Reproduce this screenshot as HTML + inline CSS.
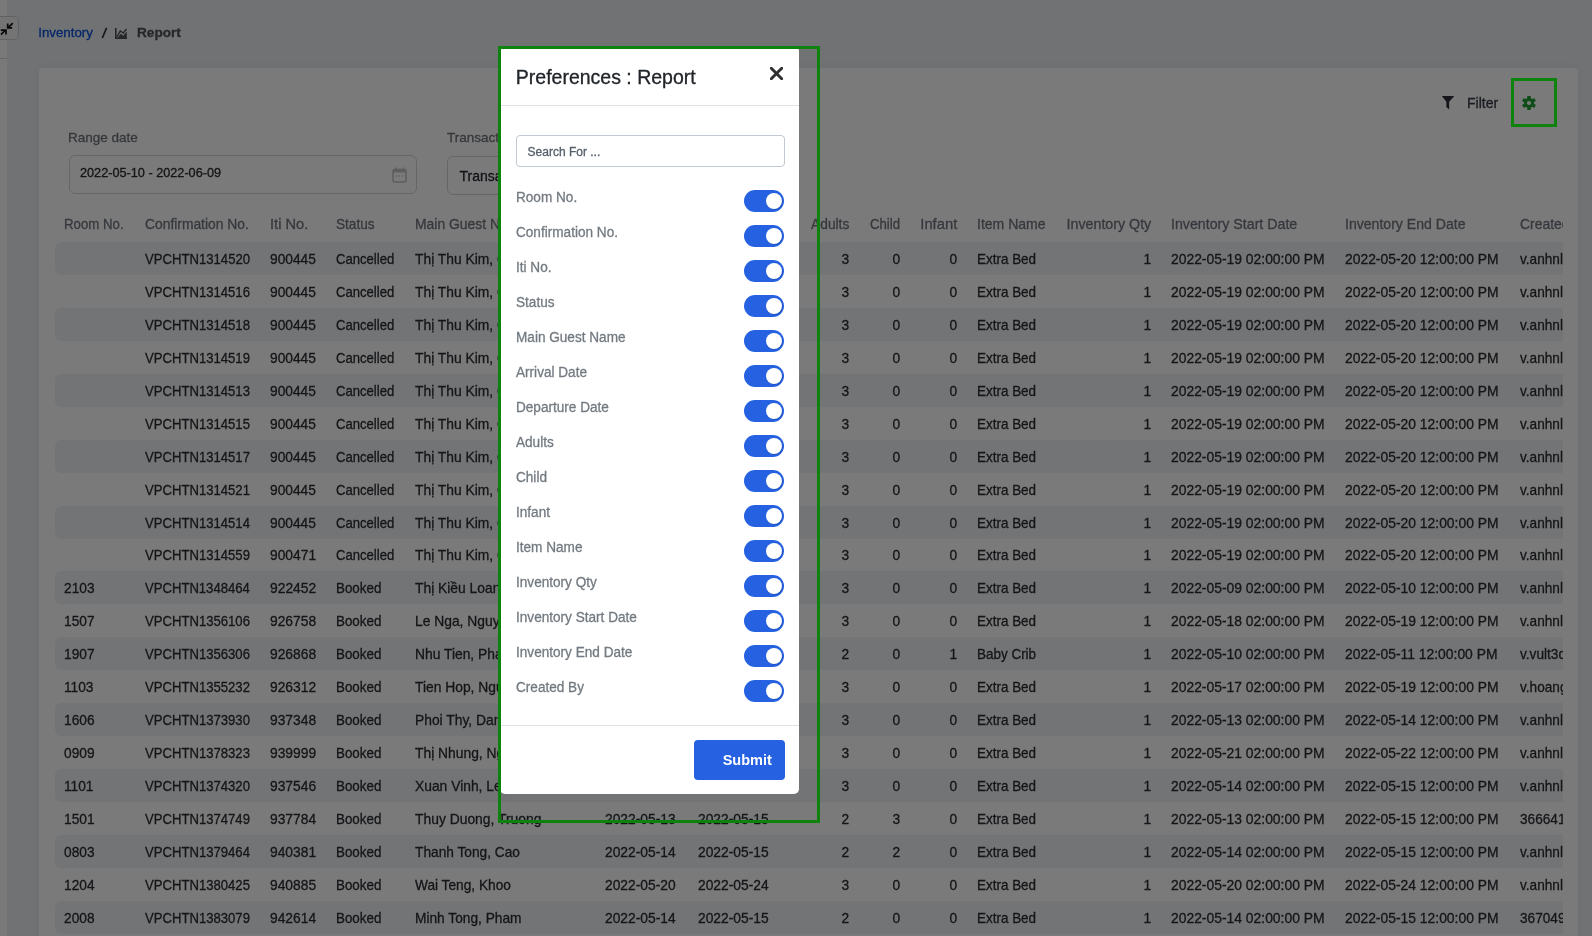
<!DOCTYPE html>
<html><head><meta charset="utf-8">
<style>
*{margin:0;padding:0;box-sizing:border-box}
html,body{width:1592px;height:936px;overflow:hidden}
body{position:relative;background:#eceef1;font-family:"Liberation Sans",sans-serif;color:#3b3d42}
.abs{position:absolute}
#tbl,#modal,#bc,#filt,.lbl,.inp{will-change:transform}
.c,.hc,.lbl,.inp span,#filt,.tl,#mtitle,#srch span,#bc span{-webkit-text-stroke:0.3px currentColor}
#side{position:absolute;left:0;top:0;width:7px;height:936px;background:#fdfdfd}
#side .hl{position:absolute;left:0;top:58px;width:7px;height:1px;background:#d9d9d9}
#cmp{position:absolute;left:-10px;top:16px;width:29px;height:24px;border:1px solid #c9cbcf;border-radius:5px;background:#f3f3f3}
#bc{position:absolute;left:39px;top:23px;height:20px;font-size:13.3px;white-space:nowrap}
#bc .lnk{position:absolute;left:-0.8px;top:0;line-height:20px;color:#0a50dc}
#bc .sl{position:absolute;left:62.5px;top:0;line-height:20px;color:#3e4147;font-size:14px;font-weight:bold}
#bc .rep{position:absolute;left:98px;top:0;line-height:20px;color:#4f5258;font-weight:bold;font-size:13.6px}
#card{position:absolute;left:39px;top:68px;width:1539px;height:900px;background:#fff;border-radius:4px;box-shadow:0 0 10px rgba(60,60,70,.05)}
#filt{position:absolute;left:1466.5px;top:93px;line-height:20px;font-size:14px;color:#363b47}
#tbl{position:absolute;left:55px;top:200px;width:1508px;height:736px;overflow:hidden}
.hc,.c{position:absolute;white-space:nowrap;font-size:14.5px;transform-origin:0 50%}
.hc{top:14px;line-height:20px;color:#70757e}
.r{text-align:right}
.row{position:absolute;left:0;width:1700px;height:33px;border-radius:6px}
.row.s{background:#f1f2f5}
.c{top:1px;line-height:33px;color:#2c2e33}
.lbl{position:absolute;font-size:13.5px;line-height:20px;color:#70747b;white-space:nowrap}
.inp{position:absolute;border:1px solid #d3d6dd;border-radius:6px;background:#fff}
.inp span{position:absolute;white-space:nowrap;color:#2b2b2b}
#ov{position:absolute;left:0;top:0;width:1592px;height:936px;background:rgba(0,0,0,0.52)}
#modal{position:absolute;left:500px;top:46px;width:299px;height:748px;background:#fff;border-radius:5px}
#mtitle{position:absolute;left:15.8px;top:18px;line-height:26px;font-size:19.5px;color:#212529;white-space:nowrap}
#mdiv1{position:absolute;left:0;top:59px;width:299px;height:1px;background:#dee2e6}
#srch{position:absolute;left:16px;top:89px;width:268.5px;height:32px;border:1px solid #c3c9d0;border-radius:4px}
#srch span{position:absolute;left:10.6px;top:6px;line-height:20px;font-size:12px;color:#56606b;white-space:nowrap}
#trs{position:absolute;left:1px;top:141.5px;width:298px}
.tr{position:absolute;left:0;width:298px;height:35px}
.tl{position:absolute;left:15.2px;top:0px;line-height:20px;font-size:13.8px;color:#737a80;transform:scaleX(.985);transform-origin:0 50%;white-space:nowrap}
.tg{position:absolute;left:243px;top:2.5px;width:40px;height:22px;border-radius:11px;background:#2661e2}
.tg i{position:absolute;right:2px;top:3px;width:16px;height:16px;border-radius:50%;background:#fff;box-shadow:0.5px 0.5px 1px rgba(0,0,0,.25)}
#mdiv2{position:absolute;left:0;top:679px;width:299px;height:1px;background:#dee2e6}
#sub{position:absolute;left:194px;top:694px;width:91px;height:40px;border-radius:4px;background:#2661e2}
#sub span{position:absolute;left:28.7px;top:10px;line-height:20px;font-size:14.5px;font-weight:bold;color:#fff}
.gb{position:absolute;border:3px solid #0d830d}
</style></head><body>
<div id="side"><div class="hl"></div></div>
<div id="cmp"></div><svg class="abs" style="left:0;top:22px" width="14" height="14" viewBox="0 0 14 14"><path d="M12.8 1.1 L8.2 5.6 M7.7 1.6 V5.9 H12.2 M1 12.6 L5.6 8 M0.8 8.1 H6 V12.4" stroke="#111" stroke-width="1.7" fill="none"/></svg>
<div id="bc">
 <span class="lnk">Inventory</span>
 <svg class="abs" style="left:62px;top:4px" width="7" height="12" viewBox="0 0 7 12"><path d="M1.3 11 L5.6 0.8" stroke="#2f3237" stroke-width="1.7"/></svg>
 <svg class="abs" style="left:76px;top:4.8px" width="13" height="11" viewBox="0 0 13 11"><path d="M0.8 0 V10.2 H12" stroke="#4f5258" stroke-width="1.6" fill="none"/><path d="M1.8 9 L5.3 3 L8.4 5 L11.5 0.8" stroke="#4f5258" stroke-width="1.4" fill="none"/><path d="M2.6 10 L5.5 5.8 L8.3 7.8 L11.8 3.6 V10.2 H2.6 Z" fill="#4f5258"/></svg>
 <span class="rep">Report</span>
</div>
<div id="card"></div>
<svg class="abs" style="left:1441.85px;top:95.95px" width="13" height="14" viewBox="0 0 13 14"><path d="M0 0.3 Q0 0 0.4 0 H11.7 Q12.1 0 12.1 0.3 L7.15 5.65 V13.6 L4.35 11 V5.65 Z" fill="#2a2f3a"/></svg>
<div id="filt">Filter</div>
<svg class="abs" style="left:1522px;top:96px" width="14" height="14" viewBox="-7 -7 14 14"><circle r="3.55" fill="none" stroke="#20a035" stroke-width="2.9"/><g fill="#20a035"><rect x="-1.8" y="-7" width="3.6" height="3.4"/><rect x="-1.8" y="-7" width="3.6" height="3.4" transform="rotate(60)"/><rect x="-1.8" y="-7" width="3.6" height="3.4" transform="rotate(120)"/><rect x="-1.8" y="-7" width="3.6" height="3.4" transform="rotate(180)"/><rect x="-1.8" y="-7" width="3.6" height="3.4" transform="rotate(240)"/><rect x="-1.8" y="-7" width="3.6" height="3.4" transform="rotate(300)"/></g></svg>
<div class="lbl" style="left:68px;top:128px">Range date</div>
<div class="inp" style="left:69px;top:155px;width:347.5px;height:38.5px"><span style="left:10px;top:7px;line-height:20px;font-size:12.7px">2022-05-10 - 2022-06-09</span>
<svg class="abs" style="left:322px;top:10.5px" width="15" height="16" viewBox="0 0 15 16"><rect x="1" y="2.5" width="13" height="12.5" rx="1.5" fill="none" stroke="#c4c4c4" stroke-width="1.6"/><rect x="1" y="2.5" width="13" height="3" fill="#c4c4c4"/><path d="M4 0.5 V3 M11 0.5 V3" stroke="#c4c4c4" stroke-width="1.5"/><circle cx="4.5" cy="9" r=".8" fill="#c4c4c4"/><circle cx="7.5" cy="9" r=".8" fill="#c4c4c4"/><circle cx="10.5" cy="9" r=".8" fill="#c4c4c4"/></svg></div>
<div class="lbl" style="left:446.5px;top:128px">Transaction Type</div>
<div class="inp" style="left:447px;top:155.5px;width:347px;height:39px"><span style="left:11.5px;top:8.5px;line-height:20px;font-size:14px;color:#262933">Transaction Type</span></div>
<div id="tbl">
<span class="hc" style="left:9.0px;transform:scaleX(0.913)">Room No.</span><span class="hc" style="left:90.0px;transform:scaleX(0.954)">Confirmation No.</span><span class="hc" style="left:215.0px;transform:scaleX(1.011)">Iti No.</span><span class="hc" style="left:281.0px;transform:scaleX(0.939)">Status</span><span class="hc" style="left:360.0px;transform:scaleX(0.960)">Main Guest Name</span><span class="hc" style="left:550.0px;transform:scaleX(0.960)">Arrival Date</span><span class="hc" style="left:642.6px;transform:scaleX(0.960)">Departure Date</span><span class="hc r" style="right:713.5px;transform:scaleX(0.948);transform-origin:100% 50%">Adults</span><span class="hc r" style="right:663.3px;transform:scaleX(0.911);transform-origin:100% 50%">Child</span><span class="hc r" style="right:606.0px;transform:scaleX(1.020);transform-origin:100% 50%">Infant</span><span class="hc" style="left:922.0px;transform:scaleX(0.967)">Item Name</span><span class="hc r" style="right:412.0px;transform:scaleX(0.982);transform-origin:100% 50%">Inventory Qty</span><span class="hc" style="left:1116.4px;transform:scaleX(0.979)">Inventory Start Date</span><span class="hc" style="left:1290.3px;transform:scaleX(0.971)">Inventory End Date</span><span class="hc" style="left:1464.6px;transform:scaleX(0.960)">Created By</span>
<div class="row s" style="top:42.0px"><span class="c" style="left:90.0px;transform:scaleX(0.905)">VPCHTN1314520</span><span class="c" style="left:215.0px;transform:scaleX(0.949)">900445</span><span class="c" style="left:281.0px;transform:scaleX(0.903)">Cancelled</span><span class="c" style="left:360.0px;transform:scaleX(0.954)">Thị Thu Kim, Cao</span><span class="c" style="left:550.0px;transform:scaleX(0.953)">2022-05-19</span><span class="c" style="left:642.6px;transform:scaleX(0.953)">2022-05-20</span><span class="c r" style="right:905.5px;transform:scaleX(0.950);transform-origin:100% 50%">3</span><span class="c r" style="right:855.3px;transform:scaleX(0.950);transform-origin:100% 50%">0</span><span class="c r" style="right:798.0px;transform:scaleX(0.950);transform-origin:100% 50%">0</span><span class="c" style="left:922.0px;transform:scaleX(0.928)">Extra Bed</span><span class="c r" style="right:604.0px;transform:scaleX(0.950);transform-origin:100% 50%">1</span><span class="c" style="left:1116.4px;transform:scaleX(0.957)">2022-05-19 02:00:00 PM</span><span class="c" style="left:1290.3px;transform:scaleX(0.957)">2022-05-20 12:00:00 PM</span><span class="c" style="left:1464.6px;transform:scaleX(0.940)">v.anhnl</span></div>
<div class="row" style="top:74.94px"><span class="c" style="left:90.0px;transform:scaleX(0.904)">VPCHTN1314516</span><span class="c" style="left:215.0px;transform:scaleX(0.949)">900445</span><span class="c" style="left:281.0px;transform:scaleX(0.903)">Cancelled</span><span class="c" style="left:360.0px;transform:scaleX(0.954)">Thị Thu Kim, Cao</span><span class="c" style="left:550.0px;transform:scaleX(0.953)">2022-05-19</span><span class="c" style="left:642.6px;transform:scaleX(0.953)">2022-05-20</span><span class="c r" style="right:905.5px;transform:scaleX(0.950);transform-origin:100% 50%">3</span><span class="c r" style="right:855.3px;transform:scaleX(0.950);transform-origin:100% 50%">0</span><span class="c r" style="right:798.0px;transform:scaleX(0.950);transform-origin:100% 50%">0</span><span class="c" style="left:922.0px;transform:scaleX(0.928)">Extra Bed</span><span class="c r" style="right:604.0px;transform:scaleX(0.950);transform-origin:100% 50%">1</span><span class="c" style="left:1116.4px;transform:scaleX(0.957)">2022-05-19 02:00:00 PM</span><span class="c" style="left:1290.3px;transform:scaleX(0.957)">2022-05-20 12:00:00 PM</span><span class="c" style="left:1464.6px;transform:scaleX(0.940)">v.anhnl</span></div>
<div class="row s" style="top:107.88px"><span class="c" style="left:90.0px;transform:scaleX(0.904)">VPCHTN1314518</span><span class="c" style="left:215.0px;transform:scaleX(0.949)">900445</span><span class="c" style="left:281.0px;transform:scaleX(0.903)">Cancelled</span><span class="c" style="left:360.0px;transform:scaleX(0.954)">Thị Thu Kim, Cao</span><span class="c" style="left:550.0px;transform:scaleX(0.953)">2022-05-19</span><span class="c" style="left:642.6px;transform:scaleX(0.953)">2022-05-20</span><span class="c r" style="right:905.5px;transform:scaleX(0.950);transform-origin:100% 50%">3</span><span class="c r" style="right:855.3px;transform:scaleX(0.950);transform-origin:100% 50%">0</span><span class="c r" style="right:798.0px;transform:scaleX(0.950);transform-origin:100% 50%">0</span><span class="c" style="left:922.0px;transform:scaleX(0.928)">Extra Bed</span><span class="c r" style="right:604.0px;transform:scaleX(0.950);transform-origin:100% 50%">1</span><span class="c" style="left:1116.4px;transform:scaleX(0.957)">2022-05-19 02:00:00 PM</span><span class="c" style="left:1290.3px;transform:scaleX(0.957)">2022-05-20 12:00:00 PM</span><span class="c" style="left:1464.6px;transform:scaleX(0.940)">v.anhnl</span></div>
<div class="row" style="top:140.82px"><span class="c" style="left:90.0px;transform:scaleX(0.904)">VPCHTN1314519</span><span class="c" style="left:215.0px;transform:scaleX(0.949)">900445</span><span class="c" style="left:281.0px;transform:scaleX(0.903)">Cancelled</span><span class="c" style="left:360.0px;transform:scaleX(0.954)">Thị Thu Kim, Cao</span><span class="c" style="left:550.0px;transform:scaleX(0.953)">2022-05-19</span><span class="c" style="left:642.6px;transform:scaleX(0.953)">2022-05-20</span><span class="c r" style="right:905.5px;transform:scaleX(0.950);transform-origin:100% 50%">3</span><span class="c r" style="right:855.3px;transform:scaleX(0.950);transform-origin:100% 50%">0</span><span class="c r" style="right:798.0px;transform:scaleX(0.950);transform-origin:100% 50%">0</span><span class="c" style="left:922.0px;transform:scaleX(0.928)">Extra Bed</span><span class="c r" style="right:604.0px;transform:scaleX(0.950);transform-origin:100% 50%">1</span><span class="c" style="left:1116.4px;transform:scaleX(0.957)">2022-05-19 02:00:00 PM</span><span class="c" style="left:1290.3px;transform:scaleX(0.957)">2022-05-20 12:00:00 PM</span><span class="c" style="left:1464.6px;transform:scaleX(0.940)">v.anhnl</span></div>
<div class="row s" style="top:173.76px"><span class="c" style="left:90.0px;transform:scaleX(0.904)">VPCHTN1314513</span><span class="c" style="left:215.0px;transform:scaleX(0.949)">900445</span><span class="c" style="left:281.0px;transform:scaleX(0.903)">Cancelled</span><span class="c" style="left:360.0px;transform:scaleX(0.954)">Thị Thu Kim, Cao</span><span class="c" style="left:550.0px;transform:scaleX(0.953)">2022-05-19</span><span class="c" style="left:642.6px;transform:scaleX(0.953)">2022-05-20</span><span class="c r" style="right:905.5px;transform:scaleX(0.950);transform-origin:100% 50%">3</span><span class="c r" style="right:855.3px;transform:scaleX(0.950);transform-origin:100% 50%">0</span><span class="c r" style="right:798.0px;transform:scaleX(0.950);transform-origin:100% 50%">0</span><span class="c" style="left:922.0px;transform:scaleX(0.928)">Extra Bed</span><span class="c r" style="right:604.0px;transform:scaleX(0.950);transform-origin:100% 50%">1</span><span class="c" style="left:1116.4px;transform:scaleX(0.957)">2022-05-19 02:00:00 PM</span><span class="c" style="left:1290.3px;transform:scaleX(0.957)">2022-05-20 12:00:00 PM</span><span class="c" style="left:1464.6px;transform:scaleX(0.940)">v.anhnl</span></div>
<div class="row" style="top:206.7px"><span class="c" style="left:90.0px;transform:scaleX(0.904)">VPCHTN1314515</span><span class="c" style="left:215.0px;transform:scaleX(0.949)">900445</span><span class="c" style="left:281.0px;transform:scaleX(0.903)">Cancelled</span><span class="c" style="left:360.0px;transform:scaleX(0.954)">Thị Thu Kim, Cao</span><span class="c" style="left:550.0px;transform:scaleX(0.953)">2022-05-19</span><span class="c" style="left:642.6px;transform:scaleX(0.953)">2022-05-20</span><span class="c r" style="right:905.5px;transform:scaleX(0.950);transform-origin:100% 50%">3</span><span class="c r" style="right:855.3px;transform:scaleX(0.950);transform-origin:100% 50%">0</span><span class="c r" style="right:798.0px;transform:scaleX(0.950);transform-origin:100% 50%">0</span><span class="c" style="left:922.0px;transform:scaleX(0.928)">Extra Bed</span><span class="c r" style="right:604.0px;transform:scaleX(0.950);transform-origin:100% 50%">1</span><span class="c" style="left:1116.4px;transform:scaleX(0.957)">2022-05-19 02:00:00 PM</span><span class="c" style="left:1290.3px;transform:scaleX(0.957)">2022-05-20 12:00:00 PM</span><span class="c" style="left:1464.6px;transform:scaleX(0.940)">v.anhnl</span></div>
<div class="row s" style="top:239.64px"><span class="c" style="left:90.0px;transform:scaleX(0.904)">VPCHTN1314517</span><span class="c" style="left:215.0px;transform:scaleX(0.949)">900445</span><span class="c" style="left:281.0px;transform:scaleX(0.903)">Cancelled</span><span class="c" style="left:360.0px;transform:scaleX(0.954)">Thị Thu Kim, Cao</span><span class="c" style="left:550.0px;transform:scaleX(0.953)">2022-05-19</span><span class="c" style="left:642.6px;transform:scaleX(0.953)">2022-05-20</span><span class="c r" style="right:905.5px;transform:scaleX(0.950);transform-origin:100% 50%">3</span><span class="c r" style="right:855.3px;transform:scaleX(0.950);transform-origin:100% 50%">0</span><span class="c r" style="right:798.0px;transform:scaleX(0.950);transform-origin:100% 50%">0</span><span class="c" style="left:922.0px;transform:scaleX(0.928)">Extra Bed</span><span class="c r" style="right:604.0px;transform:scaleX(0.950);transform-origin:100% 50%">1</span><span class="c" style="left:1116.4px;transform:scaleX(0.957)">2022-05-19 02:00:00 PM</span><span class="c" style="left:1290.3px;transform:scaleX(0.957)">2022-05-20 12:00:00 PM</span><span class="c" style="left:1464.6px;transform:scaleX(0.940)">v.anhnl</span></div>
<div class="row" style="top:272.58px"><span class="c" style="left:90.0px;transform:scaleX(0.904)">VPCHTN1314521</span><span class="c" style="left:215.0px;transform:scaleX(0.949)">900445</span><span class="c" style="left:281.0px;transform:scaleX(0.903)">Cancelled</span><span class="c" style="left:360.0px;transform:scaleX(0.954)">Thị Thu Kim, Cao</span><span class="c" style="left:550.0px;transform:scaleX(0.953)">2022-05-19</span><span class="c" style="left:642.6px;transform:scaleX(0.953)">2022-05-20</span><span class="c r" style="right:905.5px;transform:scaleX(0.950);transform-origin:100% 50%">3</span><span class="c r" style="right:855.3px;transform:scaleX(0.950);transform-origin:100% 50%">0</span><span class="c r" style="right:798.0px;transform:scaleX(0.950);transform-origin:100% 50%">0</span><span class="c" style="left:922.0px;transform:scaleX(0.928)">Extra Bed</span><span class="c r" style="right:604.0px;transform:scaleX(0.950);transform-origin:100% 50%">1</span><span class="c" style="left:1116.4px;transform:scaleX(0.957)">2022-05-19 02:00:00 PM</span><span class="c" style="left:1290.3px;transform:scaleX(0.957)">2022-05-20 12:00:00 PM</span><span class="c" style="left:1464.6px;transform:scaleX(0.940)">v.anhnl</span></div>
<div class="row s" style="top:305.52px"><span class="c" style="left:90.0px;transform:scaleX(0.904)">VPCHTN1314514</span><span class="c" style="left:215.0px;transform:scaleX(0.949)">900445</span><span class="c" style="left:281.0px;transform:scaleX(0.903)">Cancelled</span><span class="c" style="left:360.0px;transform:scaleX(0.954)">Thị Thu Kim, Cao</span><span class="c" style="left:550.0px;transform:scaleX(0.953)">2022-05-19</span><span class="c" style="left:642.6px;transform:scaleX(0.953)">2022-05-20</span><span class="c r" style="right:905.5px;transform:scaleX(0.950);transform-origin:100% 50%">3</span><span class="c r" style="right:855.3px;transform:scaleX(0.950);transform-origin:100% 50%">0</span><span class="c r" style="right:798.0px;transform:scaleX(0.950);transform-origin:100% 50%">0</span><span class="c" style="left:922.0px;transform:scaleX(0.928)">Extra Bed</span><span class="c r" style="right:604.0px;transform:scaleX(0.950);transform-origin:100% 50%">1</span><span class="c" style="left:1116.4px;transform:scaleX(0.957)">2022-05-19 02:00:00 PM</span><span class="c" style="left:1290.3px;transform:scaleX(0.957)">2022-05-20 12:00:00 PM</span><span class="c" style="left:1464.6px;transform:scaleX(0.940)">v.anhnl</span></div>
<div class="row" style="top:338.46px"><span class="c" style="left:90.0px;transform:scaleX(0.904)">VPCHTN1314559</span><span class="c" style="left:215.0px;transform:scaleX(0.952)">900471</span><span class="c" style="left:281.0px;transform:scaleX(0.903)">Cancelled</span><span class="c" style="left:360.0px;transform:scaleX(0.954)">Thị Thu Kim, Cao</span><span class="c" style="left:550.0px;transform:scaleX(0.953)">2022-05-19</span><span class="c" style="left:642.6px;transform:scaleX(0.953)">2022-05-20</span><span class="c r" style="right:905.5px;transform:scaleX(0.950);transform-origin:100% 50%">3</span><span class="c r" style="right:855.3px;transform:scaleX(0.950);transform-origin:100% 50%">0</span><span class="c r" style="right:798.0px;transform:scaleX(0.950);transform-origin:100% 50%">0</span><span class="c" style="left:922.0px;transform:scaleX(0.928)">Extra Bed</span><span class="c r" style="right:604.0px;transform:scaleX(0.950);transform-origin:100% 50%">1</span><span class="c" style="left:1116.4px;transform:scaleX(0.957)">2022-05-19 02:00:00 PM</span><span class="c" style="left:1290.3px;transform:scaleX(0.957)">2022-05-20 12:00:00 PM</span><span class="c" style="left:1464.6px;transform:scaleX(0.940)">v.anhnl</span></div>
<div class="row s" style="top:371.4px"><span class="c" style="left:9.0px;transform:scaleX(0.946)">2103</span><span class="c" style="left:90.0px;transform:scaleX(0.903)">VPCHTN1348464</span><span class="c" style="left:215.0px;transform:scaleX(0.955)">922452</span><span class="c" style="left:281.0px;transform:scaleX(0.923)">Booked</span><span class="c" style="left:360.0px;transform:scaleX(0.954)">Thị Kiều Loan, Tran</span><span class="c" style="left:550.0px;transform:scaleX(0.953)">2022-05-09</span><span class="c" style="left:642.6px;transform:scaleX(0.953)">2022-05-10</span><span class="c r" style="right:905.5px;transform:scaleX(0.950);transform-origin:100% 50%">3</span><span class="c r" style="right:855.3px;transform:scaleX(0.950);transform-origin:100% 50%">0</span><span class="c r" style="right:798.0px;transform:scaleX(0.950);transform-origin:100% 50%">0</span><span class="c" style="left:922.0px;transform:scaleX(0.928)">Extra Bed</span><span class="c r" style="right:604.0px;transform:scaleX(0.950);transform-origin:100% 50%">1</span><span class="c" style="left:1116.4px;transform:scaleX(0.957)">2022-05-09 02:00:00 PM</span><span class="c" style="left:1290.3px;transform:scaleX(0.957)">2022-05-10 12:00:00 PM</span><span class="c" style="left:1464.6px;transform:scaleX(0.940)">v.anhnl</span></div>
<div class="row" style="top:404.34px"><span class="c" style="left:9.0px;transform:scaleX(0.946)">1507</span><span class="c" style="left:90.0px;transform:scaleX(0.904)">VPCHTN1356106</span><span class="c" style="left:215.0px;transform:scaleX(0.952)">926758</span><span class="c" style="left:281.0px;transform:scaleX(0.923)">Booked</span><span class="c" style="left:360.0px;transform:scaleX(0.954)">Le Nga, Nguyen</span><span class="c" style="left:550.0px;transform:scaleX(0.953)">2022-05-18</span><span class="c" style="left:642.6px;transform:scaleX(0.953)">2022-05-19</span><span class="c r" style="right:905.5px;transform:scaleX(0.950);transform-origin:100% 50%">3</span><span class="c r" style="right:855.3px;transform:scaleX(0.950);transform-origin:100% 50%">0</span><span class="c r" style="right:798.0px;transform:scaleX(0.950);transform-origin:100% 50%">0</span><span class="c" style="left:922.0px;transform:scaleX(0.928)">Extra Bed</span><span class="c r" style="right:604.0px;transform:scaleX(0.950);transform-origin:100% 50%">1</span><span class="c" style="left:1116.4px;transform:scaleX(0.957)">2022-05-18 02:00:00 PM</span><span class="c" style="left:1290.3px;transform:scaleX(0.957)">2022-05-19 12:00:00 PM</span><span class="c" style="left:1464.6px;transform:scaleX(0.940)">v.anhnl</span></div>
<div class="row s" style="top:437.28px"><span class="c" style="left:9.0px;transform:scaleX(0.946)">1907</span><span class="c" style="left:90.0px;transform:scaleX(0.904)">VPCHTN1356306</span><span class="c" style="left:215.0px;transform:scaleX(0.952)">926868</span><span class="c" style="left:281.0px;transform:scaleX(0.923)">Booked</span><span class="c" style="left:360.0px;transform:scaleX(0.954)">Nhu Tien, Pham</span><span class="c" style="left:550.0px;transform:scaleX(0.953)">2022-05-10</span><span class="c" style="left:642.6px;transform:scaleX(0.953)">2022-05-11</span><span class="c r" style="right:905.5px;transform:scaleX(0.950);transform-origin:100% 50%">2</span><span class="c r" style="right:855.3px;transform:scaleX(0.950);transform-origin:100% 50%">0</span><span class="c r" style="right:798.0px;transform:scaleX(0.950);transform-origin:100% 50%">1</span><span class="c" style="left:922.0px;transform:scaleX(0.928)">Baby Crib</span><span class="c r" style="right:604.0px;transform:scaleX(0.950);transform-origin:100% 50%">1</span><span class="c" style="left:1116.4px;transform:scaleX(0.957)">2022-05-10 02:00:00 PM</span><span class="c" style="left:1290.3px;transform:scaleX(0.957)">2022-05-11 12:00:00 PM</span><span class="c" style="left:1464.6px;transform:scaleX(0.940)">v.vult3d</span></div>
<div class="row" style="top:470.22px"><span class="c" style="left:9.0px;transform:scaleX(0.946)">1103</span><span class="c" style="left:90.0px;transform:scaleX(0.904)">VPCHTN1355232</span><span class="c" style="left:215.0px;transform:scaleX(0.952)">926312</span><span class="c" style="left:281.0px;transform:scaleX(0.923)">Booked</span><span class="c" style="left:360.0px;transform:scaleX(0.954)">Tien Hop, Nguyen</span><span class="c" style="left:550.0px;transform:scaleX(0.953)">2022-05-17</span><span class="c" style="left:642.6px;transform:scaleX(0.953)">2022-05-19</span><span class="c r" style="right:905.5px;transform:scaleX(0.950);transform-origin:100% 50%">3</span><span class="c r" style="right:855.3px;transform:scaleX(0.950);transform-origin:100% 50%">0</span><span class="c r" style="right:798.0px;transform:scaleX(0.950);transform-origin:100% 50%">0</span><span class="c" style="left:922.0px;transform:scaleX(0.928)">Extra Bed</span><span class="c r" style="right:604.0px;transform:scaleX(0.950);transform-origin:100% 50%">1</span><span class="c" style="left:1116.4px;transform:scaleX(0.957)">2022-05-17 02:00:00 PM</span><span class="c" style="left:1290.3px;transform:scaleX(0.957)">2022-05-19 12:00:00 PM</span><span class="c" style="left:1464.6px;transform:scaleX(0.940)">v.hoang</span></div>
<div class="row s" style="top:503.16px"><span class="c" style="left:9.0px;transform:scaleX(0.946)">1606</span><span class="c" style="left:90.0px;transform:scaleX(0.904)">VPCHTN1373930</span><span class="c" style="left:215.0px;transform:scaleX(0.952)">937348</span><span class="c" style="left:281.0px;transform:scaleX(0.923)">Booked</span><span class="c" style="left:360.0px;transform:scaleX(0.954)">Phoi Thy, Dang</span><span class="c" style="left:550.0px;transform:scaleX(0.953)">2022-05-13</span><span class="c" style="left:642.6px;transform:scaleX(0.953)">2022-05-14</span><span class="c r" style="right:905.5px;transform:scaleX(0.950);transform-origin:100% 50%">3</span><span class="c r" style="right:855.3px;transform:scaleX(0.950);transform-origin:100% 50%">0</span><span class="c r" style="right:798.0px;transform:scaleX(0.950);transform-origin:100% 50%">0</span><span class="c" style="left:922.0px;transform:scaleX(0.928)">Extra Bed</span><span class="c r" style="right:604.0px;transform:scaleX(0.950);transform-origin:100% 50%">1</span><span class="c" style="left:1116.4px;transform:scaleX(0.957)">2022-05-13 02:00:00 PM</span><span class="c" style="left:1290.3px;transform:scaleX(0.957)">2022-05-14 12:00:00 PM</span><span class="c" style="left:1464.6px;transform:scaleX(0.940)">v.anhnl</span></div>
<div class="row" style="top:536.1px"><span class="c" style="left:9.0px;transform:scaleX(0.946)">0909</span><span class="c" style="left:90.0px;transform:scaleX(0.904)">VPCHTN1378323</span><span class="c" style="left:215.0px;transform:scaleX(0.952)">939999</span><span class="c" style="left:281.0px;transform:scaleX(0.923)">Booked</span><span class="c" style="left:360.0px;transform:scaleX(0.954)">Thị Nhung, Nguyen</span><span class="c" style="left:550.0px;transform:scaleX(0.953)">2022-05-21</span><span class="c" style="left:642.6px;transform:scaleX(0.953)">2022-05-22</span><span class="c r" style="right:905.5px;transform:scaleX(0.950);transform-origin:100% 50%">3</span><span class="c r" style="right:855.3px;transform:scaleX(0.950);transform-origin:100% 50%">0</span><span class="c r" style="right:798.0px;transform:scaleX(0.950);transform-origin:100% 50%">0</span><span class="c" style="left:922.0px;transform:scaleX(0.928)">Extra Bed</span><span class="c r" style="right:604.0px;transform:scaleX(0.950);transform-origin:100% 50%">1</span><span class="c" style="left:1116.4px;transform:scaleX(0.957)">2022-05-21 02:00:00 PM</span><span class="c" style="left:1290.3px;transform:scaleX(0.957)">2022-05-22 12:00:00 PM</span><span class="c" style="left:1464.6px;transform:scaleX(0.940)">v.anhnl</span></div>
<div class="row s" style="top:569.04px"><span class="c" style="left:9.0px;transform:scaleX(0.946)">1101</span><span class="c" style="left:90.0px;transform:scaleX(0.904)">VPCHTN1374320</span><span class="c" style="left:215.0px;transform:scaleX(0.952)">937546</span><span class="c" style="left:281.0px;transform:scaleX(0.923)">Booked</span><span class="c" style="left:360.0px;transform:scaleX(0.954)">Xuan Vinh, Le</span><span class="c" style="left:550.0px;transform:scaleX(0.953)">2022-05-14</span><span class="c" style="left:642.6px;transform:scaleX(0.953)">2022-05-15</span><span class="c r" style="right:905.5px;transform:scaleX(0.950);transform-origin:100% 50%">3</span><span class="c r" style="right:855.3px;transform:scaleX(0.950);transform-origin:100% 50%">0</span><span class="c r" style="right:798.0px;transform:scaleX(0.950);transform-origin:100% 50%">0</span><span class="c" style="left:922.0px;transform:scaleX(0.928)">Extra Bed</span><span class="c r" style="right:604.0px;transform:scaleX(0.950);transform-origin:100% 50%">1</span><span class="c" style="left:1116.4px;transform:scaleX(0.957)">2022-05-14 02:00:00 PM</span><span class="c" style="left:1290.3px;transform:scaleX(0.957)">2022-05-15 12:00:00 PM</span><span class="c" style="left:1464.6px;transform:scaleX(0.940)">v.anhnl</span></div>
<div class="row" style="top:601.98px"><span class="c" style="left:9.0px;transform:scaleX(0.946)">1501</span><span class="c" style="left:90.0px;transform:scaleX(0.904)">VPCHTN1374749</span><span class="c" style="left:215.0px;transform:scaleX(0.952)">937784</span><span class="c" style="left:281.0px;transform:scaleX(0.923)">Booked</span><span class="c" style="left:360.0px;transform:scaleX(0.956)">Thuy Duong, Truong</span><span class="c" style="left:550.0px;transform:scaleX(0.953)">2022-05-13</span><span class="c" style="left:642.6px;transform:scaleX(0.953)">2022-05-15</span><span class="c r" style="right:905.5px;transform:scaleX(0.950);transform-origin:100% 50%">2</span><span class="c r" style="right:855.3px;transform:scaleX(0.950);transform-origin:100% 50%">3</span><span class="c r" style="right:798.0px;transform:scaleX(0.950);transform-origin:100% 50%">0</span><span class="c" style="left:922.0px;transform:scaleX(0.928)">Extra Bed</span><span class="c r" style="right:604.0px;transform:scaleX(0.950);transform-origin:100% 50%">1</span><span class="c" style="left:1116.4px;transform:scaleX(0.957)">2022-05-13 02:00:00 PM</span><span class="c" style="left:1290.3px;transform:scaleX(0.957)">2022-05-15 12:00:00 PM</span><span class="c" style="left:1464.6px;transform:scaleX(0.940)">366641</span></div>
<div class="row s" style="top:634.92px"><span class="c" style="left:9.0px;transform:scaleX(0.946)">0803</span><span class="c" style="left:90.0px;transform:scaleX(0.904)">VPCHTN1379464</span><span class="c" style="left:215.0px;transform:scaleX(0.952)">940381</span><span class="c" style="left:281.0px;transform:scaleX(0.923)">Booked</span><span class="c" style="left:360.0px;transform:scaleX(0.946)">Thanh Tong, Cao</span><span class="c" style="left:550.0px;transform:scaleX(0.953)">2022-05-14</span><span class="c" style="left:642.6px;transform:scaleX(0.953)">2022-05-15</span><span class="c r" style="right:905.5px;transform:scaleX(0.950);transform-origin:100% 50%">2</span><span class="c r" style="right:855.3px;transform:scaleX(0.950);transform-origin:100% 50%">2</span><span class="c r" style="right:798.0px;transform:scaleX(0.950);transform-origin:100% 50%">0</span><span class="c" style="left:922.0px;transform:scaleX(0.928)">Extra Bed</span><span class="c r" style="right:604.0px;transform:scaleX(0.950);transform-origin:100% 50%">1</span><span class="c" style="left:1116.4px;transform:scaleX(0.957)">2022-05-14 02:00:00 PM</span><span class="c" style="left:1290.3px;transform:scaleX(0.957)">2022-05-15 12:00:00 PM</span><span class="c" style="left:1464.6px;transform:scaleX(0.940)">v.anhnl</span></div>
<div class="row" style="top:667.86px"><span class="c" style="left:9.0px;transform:scaleX(0.946)">1204</span><span class="c" style="left:90.0px;transform:scaleX(0.904)">VPCHTN1380425</span><span class="c" style="left:215.0px;transform:scaleX(0.952)">940885</span><span class="c" style="left:281.0px;transform:scaleX(0.923)">Booked</span><span class="c" style="left:360.0px;transform:scaleX(0.944)">Wai Teng, Khoo</span><span class="c" style="left:550.0px;transform:scaleX(0.953)">2022-05-20</span><span class="c" style="left:642.6px;transform:scaleX(0.953)">2022-05-24</span><span class="c r" style="right:905.5px;transform:scaleX(0.950);transform-origin:100% 50%">3</span><span class="c r" style="right:855.3px;transform:scaleX(0.950);transform-origin:100% 50%">0</span><span class="c r" style="right:798.0px;transform:scaleX(0.950);transform-origin:100% 50%">0</span><span class="c" style="left:922.0px;transform:scaleX(0.928)">Extra Bed</span><span class="c r" style="right:604.0px;transform:scaleX(0.950);transform-origin:100% 50%">1</span><span class="c" style="left:1116.4px;transform:scaleX(0.957)">2022-05-20 02:00:00 PM</span><span class="c" style="left:1290.3px;transform:scaleX(0.957)">2022-05-24 12:00:00 PM</span><span class="c" style="left:1464.6px;transform:scaleX(0.940)">v.anhnl</span></div>
<div class="row s" style="top:700.8px"><span class="c" style="left:9.0px;transform:scaleX(0.946)">2008</span><span class="c" style="left:90.0px;transform:scaleX(0.904)">VPCHTN1383079</span><span class="c" style="left:215.0px;transform:scaleX(0.952)">942614</span><span class="c" style="left:281.0px;transform:scaleX(0.923)">Booked</span><span class="c" style="left:360.0px;transform:scaleX(0.946)">Minh Tong, Pham</span><span class="c" style="left:550.0px;transform:scaleX(0.953)">2022-05-14</span><span class="c" style="left:642.6px;transform:scaleX(0.953)">2022-05-15</span><span class="c r" style="right:905.5px;transform:scaleX(0.950);transform-origin:100% 50%">2</span><span class="c r" style="right:855.3px;transform:scaleX(0.950);transform-origin:100% 50%">0</span><span class="c r" style="right:798.0px;transform:scaleX(0.950);transform-origin:100% 50%">0</span><span class="c" style="left:922.0px;transform:scaleX(0.928)">Extra Bed</span><span class="c r" style="right:604.0px;transform:scaleX(0.950);transform-origin:100% 50%">1</span><span class="c" style="left:1116.4px;transform:scaleX(0.957)">2022-05-14 02:00:00 PM</span><span class="c" style="left:1290.3px;transform:scaleX(0.957)">2022-05-15 12:00:00 PM</span><span class="c" style="left:1464.6px;transform:scaleX(0.940)">367049</span></div>
</div>
<div id="ov"></div>
<div id="modal">
 <div id="mtitle">Preferences : Report</div>
 <svg class="abs" style="left:270px;top:20.7px" width="13" height="13" viewBox="0 0 13 13"><path d="M1.3 1.3 L11.7 11.7 M11.7 1.3 L1.3 11.7" stroke="#2f2f2f" stroke-width="2.9" stroke-linecap="square"/></svg>
 <div id="mdiv1"></div>
 <div id="srch"><span>Search For ...</span></div>
 <div id="trs">
<div class="tr" style="top:0px"><span class="tl">Room No.</span><span class="tg"><i></i></span></div>
<div class="tr" style="top:35px"><span class="tl">Confirmation No.</span><span class="tg"><i></i></span></div>
<div class="tr" style="top:70px"><span class="tl">Iti No.</span><span class="tg"><i></i></span></div>
<div class="tr" style="top:105px"><span class="tl">Status</span><span class="tg"><i></i></span></div>
<div class="tr" style="top:140px"><span class="tl">Main Guest Name</span><span class="tg"><i></i></span></div>
<div class="tr" style="top:175px"><span class="tl">Arrival Date</span><span class="tg"><i></i></span></div>
<div class="tr" style="top:210px"><span class="tl">Departure Date</span><span class="tg"><i></i></span></div>
<div class="tr" style="top:245px"><span class="tl">Adults</span><span class="tg"><i></i></span></div>
<div class="tr" style="top:280px"><span class="tl">Child</span><span class="tg"><i></i></span></div>
<div class="tr" style="top:315px"><span class="tl">Infant</span><span class="tg"><i></i></span></div>
<div class="tr" style="top:350px"><span class="tl">Item Name</span><span class="tg"><i></i></span></div>
<div class="tr" style="top:385px"><span class="tl">Inventory Qty</span><span class="tg"><i></i></span></div>
<div class="tr" style="top:420px"><span class="tl">Inventory Start Date</span><span class="tg"><i></i></span></div>
<div class="tr" style="top:455px"><span class="tl">Inventory End Date</span><span class="tg"><i></i></span></div>
<div class="tr" style="top:490px"><span class="tl">Created By</span><span class="tg"><i></i></span></div>
 </div>
 <div id="mdiv2"></div>
 <div id="sub"><span>Submit</span></div>
</div>
<div class="gb" style="left:498px;top:46px;width:322px;height:776.5px"></div>
<div class="gb" style="left:1511px;top:78px;width:46px;height:49px"></div>
</body></html>
